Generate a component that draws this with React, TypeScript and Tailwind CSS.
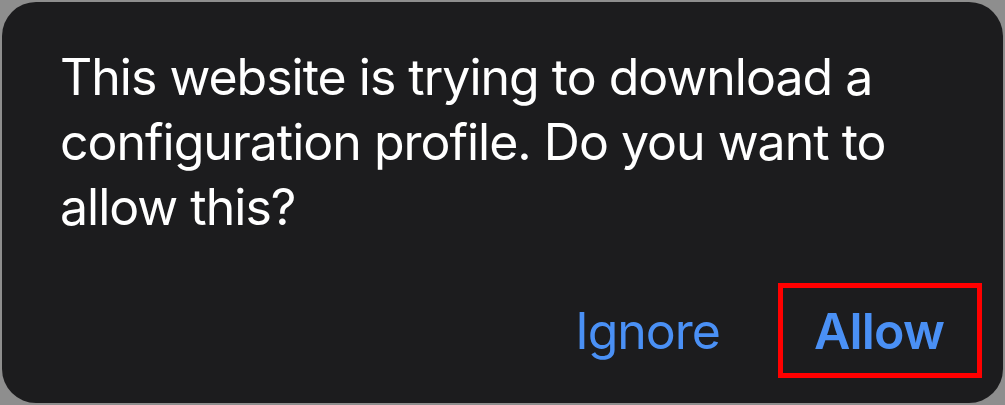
export default function App() {
  return (
    <div className="w-[1005px] h-[405px] bg-[#8e8e8e] p-[2px]" style={{ fontFamily: "Inter, 'Noto Sans', sans-serif" }}>
      <div className="w-full h-full bg-[#1c1c1e] rounded-[34px] flex flex-col">
        <p className="pl-[58px] pr-[40px] pt-[43px] text-white text-[50px] leading-[65px] tracking-[-1px]">
          This website is trying to download a<br />
          configuration profile. Do you want to<br />
          allow this?
        </p>
        <div className="flex justify-end items-center mt-[43px] pr-[21px]">
          <span className="text-[#4a90f5] text-[50px] leading-[60px] mr-[58px] tracking-[-1px]">Ignore</span>
          <div className="w-[204px] h-[95px] border-[5px] border-[#ff0000] flex items-center justify-center">
            <span className="text-[#4a90f5] text-[50px] font-semibold leading-[60px] tracking-[-0.8px] pr-[2px]">Allow</span>
          </div>
        </div>
      </div>
    </div>
  );
}
